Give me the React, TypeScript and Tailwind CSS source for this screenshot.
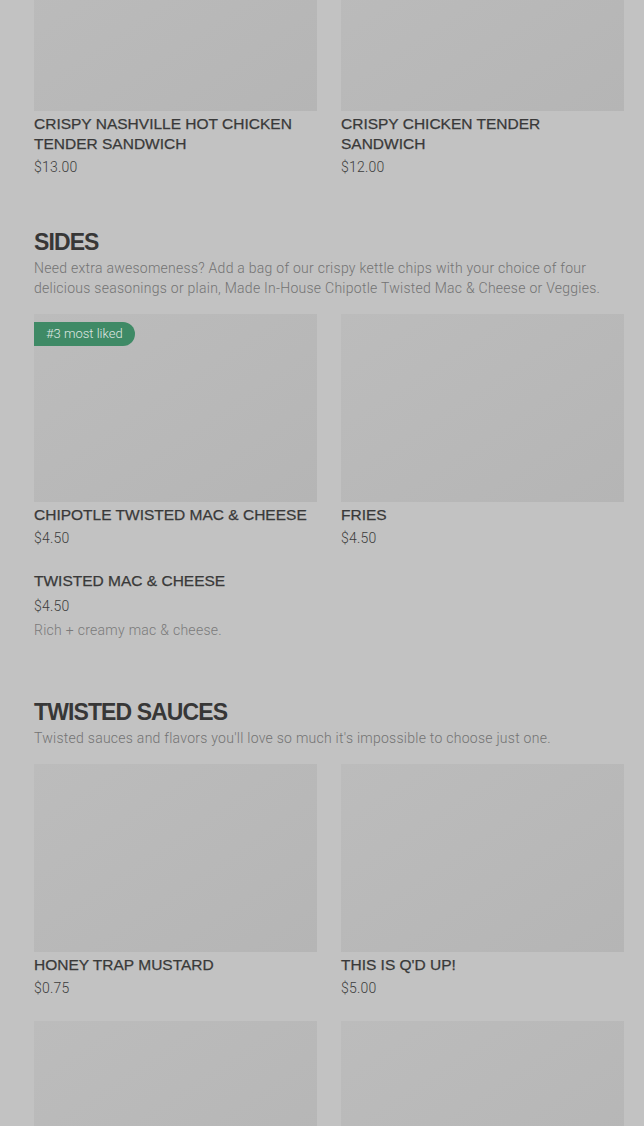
import React from "react";

type Item = { name: string; price: string; desc?: string; badge?: string; noImage?: boolean };

const TITLE = { fontFamily: "'Liberation Sans', Arial, sans-serif" };

function Card({ item }: { item: Item }) {
  return (
    <div className="flex flex-col">
      {!item.noImage && (
        <div className="relative h-[188px] w-full bg-gradient-to-br from-[#bcbcbc] to-[#b5b5b5]">
          {item.badge && (
            <span className="absolute left-0 top-[8px] h-[24px] pl-[12px] pr-[12px] rounded-r-full bg-[#3f8a66] text-[#dfe7e2] text-[13px] leading-[24px] font-light">
              {item.badge}
            </span>
          )}
        </div>
      )}
      <div className={item.noImage ? "" : "mt-[3px]"}>
        <div style={TITLE} className="text-[15.5px] leading-[20px] font-normal uppercase text-[#393939] [-webkit-text-stroke:0.25px_#393939]">
          {item.name}
        </div>
        <div className={`${item.noImage ? "mt-[5px]" : "mt-[3px]"} text-[14px] leading-[20px] font-light tracking-[0.2px] text-[#3d3d3d]`}>{item.price}</div>
        {item.desc && (
          <div className="mt-[4px] text-[14px] leading-[20px] font-light tracking-[0.28px] text-[#7a7a7a]">{item.desc}</div>
        )}
      </div>
    </div>
  );
}

export default function App() {
  return (
    <div
      className="min-h-[1126px] w-[644px] bg-[#c2c2c2] overflow-hidden"
      style={{ fontFamily: "Roboto, 'Liberation Sans', sans-serif" }}
    >
      <div className="pl-[34px] pr-[20px]">
        <div className="grid grid-cols-2 gap-x-[24px] -mt-[77px]">
          <Card item={{ name: "Crispy Nashville Hot Chicken Tender Sandwich", price: "$13.00" }} />
          <Card item={{ name: "Crispy Chicken Tender Sandwich", price: "$12.00" }} />
        </div>

        <section className="mt-[50px]">
          <h2 style={TITLE} className="text-[23px] leading-[30px] font-bold uppercase text-[#373737] tracking-[-0.9px]">Sides</h2>
          <p className="mt-[1px] text-[14px] leading-[20px] font-light tracking-[0.26px] text-[#737373]">
            Need extra awesomeness? Add a bag of our crispy kettle chips with your choice of four delicious seasonings or plain, Made In-House Chipotle Twisted Mac &amp; Cheese or Veggies.
          </p>
          <div className="mt-[16px] grid grid-cols-2 gap-x-[24px] gap-y-[23px]">
            <Card item={{ name: "Chipotle Twisted Mac & Cheese", price: "$4.50", badge: "#3 most liked" }} />
            <Card item={{ name: "Fries", price: "$4.50" }} />
            <Card item={{ name: "Twisted Mac & Cheese", price: "$4.50", desc: "Rich + creamy mac & cheese.", noImage: true }} />
          </div>
        </section>

        <section className="mt-[57px]">
          <h2 style={TITLE} className="text-[23px] leading-[30px] font-bold uppercase text-[#373737] tracking-[-0.9px]">Twisted Sauces</h2>
          <p className="mt-[1px] text-[14px] leading-[20px] font-light tracking-[0.26px] text-[#737373]">
            Twisted sauces and flavors you'll love so much it's impossible to choose just one.
          </p>
          <div className="mt-[16px] grid grid-cols-2 gap-x-[24px] gap-y-[23px]">
            <Card item={{ name: "Honey Trap Mustard", price: "$0.75" }} />
            <Card item={{ name: "This Is Q'd Up!", price: "$5.00" }} />
            <Card item={{ name: "", price: "" }} />
            <Card item={{ name: "", price: "" }} />
          </div>
        </section>
      </div>
    </div>
  );
}
